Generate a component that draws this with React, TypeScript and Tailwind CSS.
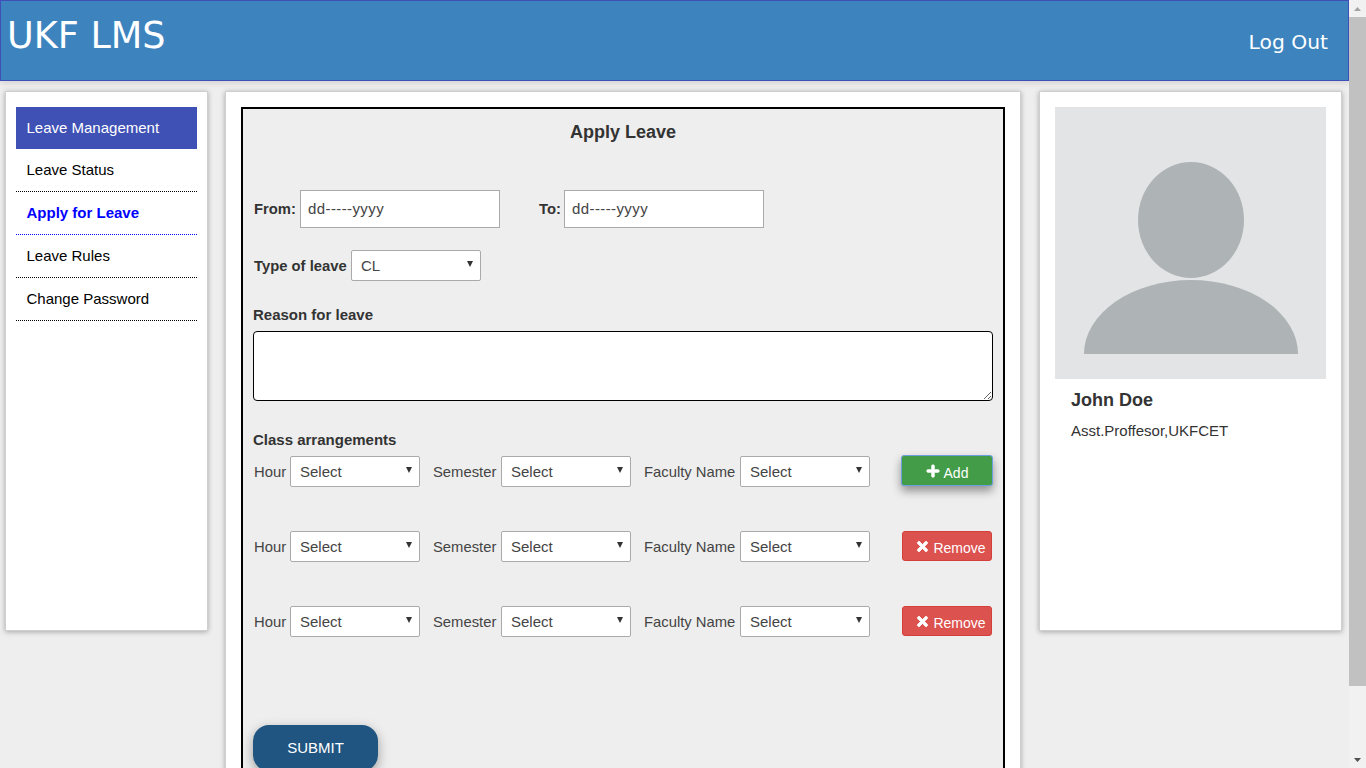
import React from 'react';
import { FaPlus, FaTimes } from 'react-icons/fa';

const menu = [
  { label: 'Leave Status' },
  { label: 'Apply for Leave', active: true },
  { label: 'Leave Rules' },
  { label: 'Change Password' },
];

function Dropdown({ value, className }: { value: string; className?: string }) {
  return (
    <div className={`relative h-[31px] w-[130px] ${className ?? ''}`}>
      <select className="h-full w-full appearance-none rounded-[2px] border border-[#aaa] bg-white pl-[9px] pt-[2px] text-[15px] font-normal text-[#444] outline-none">
        <option>{value}</option>
      </select>
      <svg className="pointer-events-none absolute right-[8px] top-[11px]" width="6" height="6" viewBox="0 0 6 6">
        <path d="M0 0h6L3 6z" fill="#333" />
      </svg>
    </div>
  );
}

function ArrangementRow({ first }: { first?: boolean }) {
  return (
    <div className="flex h-[31px] items-center text-[14.8px] text-[#444]">
      <span className="mt-[2px] w-[37px] pl-px">Hour</span>
      <Dropdown value="Select" />
      <span className="ml-[13px] mt-[2px] w-[68px]">Semester</span>
      <Dropdown value="Select" />
      <span className="ml-[13px] mt-[2px] w-[96px]">Faculty Name</span>
      <Dropdown value="Select" />
      {first ? (
        <button className="ml-[31px] mt-[-2px] flex h-[31px] w-[92px] items-center justify-center gap-[4px] rounded-[3px] border border-[#6a9fe0] bg-[#439c47] text-[14px] text-white shadow-[0_5px_10px_rgba(0,0,0,0.4)]">
          <FaPlus className="size-[14px] stroke-[30]" />
          <span className="mt-[6px]">Add</span>
        </button>
      ) : (
        <button className="ml-[32px] mt-[-1px] flex h-[30px] w-[90px] items-center justify-center gap-[3px] rounded-[3px] border border-[#d43f3a] bg-[#dc524f] pl-[7px] text-[14px] text-white">
          <FaTimes className="size-[15px] stroke-[30]" />
          <span className="mt-[4px]">Remove</span>
        </button>
      )}
    </div>
  );
}

function Scrollbar() {
  return (
    <div className="flex h-screen w-[17px] shrink-0 flex-col bg-[#f1f1f1]">
      <div className="flex h-[17px] items-center justify-center">
        <svg width="7" height="4" viewBox="0 0 7 4"><path d="M3.5 0L7 4H0z" fill="#a3a3a3" /></svg>
      </div>
      <div className="h-[669px] w-full bg-[#c1c1c1]" />
      <div className="flex-1" />
      <div className="flex h-[17px] items-center justify-center">
        <svg width="7" height="4" viewBox="0 0 7 4"><path d="M0 0h7L3.5 4z" fill="#505050" /></svg>
      </div>
    </div>
  );
}

export default function App() {
  return (
    <div className="flex h-screen overflow-hidden bg-[#eeeeee] font-['Liberation_Sans',Arial,sans-serif]">
      <div className="h-screen min-w-0 flex-1 overflow-hidden">
        <header className="flex h-[81px] items-start justify-between border border-[#3f4fb8] bg-[#3d84bf] font-['DejaVu_Sans',Verdana,sans-serif] text-white shadow-[0_2px_6px_rgba(0,0,0,0.12)]">
          <div className="ml-[6px] mt-[13px] text-[36.6px] leading-[44px]">UKF LMS</div>
          <div className="mr-[20px] mt-[27px] text-[20.3px] leading-[28px]">Log Out</div>
        </header>

        <div className="mt-[10px] flex items-start pl-[5px]">
          <aside className="h-[540px] w-[203px] shrink-0 border border-[#cfcfcf] bg-white px-[10px] pt-[15px] shadow-[0_1px_5px_rgba(0,0,0,0.3)]">
            <div className="flex h-[42px] items-center bg-[#3f51b5] pl-[10.5px] text-[15px] text-white">Leave Management</div>
            {menu.map((item) => (
              <div
                key={item.label}
                className={`flex h-[43px] items-center border-b border-dotted pl-[10.5px] text-[15px] ${
                  item.active ? 'border-[#0000ff] font-bold text-[#0000ff]' : 'border-black text-black'
                }`}
              >
                {item.label}
              </div>
            ))}
          </aside>

          <main className="ml-[17px] h-[900px] w-[796px] shrink-0 border border-[#cfcfcf] bg-white px-[15px] pt-[15px] shadow-[0_1px_5px_rgba(0,0,0,0.3)]">
            <div className="h-[800px] border-2 border-black bg-[#eeeeee] px-[10px] text-[#333]">
              <h2 className="mt-[12px] text-center text-[18px] font-bold leading-[22px]">Apply Leave</h2>

              <div className="mt-[47px] flex h-[38px] items-center text-[14.8px] font-bold">
                <span className="w-[47px] pl-px">From:</span>
                <input readOnly defaultValue="dd-----yyyy" className="h-[38px] w-[200px] border border-[#aaa] bg-white pb-px pl-[7px] text-[15px] font-normal tracking-[0.4px] text-[#444] outline-none" />
                <span className="ml-[39px] w-[25px]">To:</span>
                <input readOnly defaultValue="dd-----yyyy" className="h-[38px] w-[200px] border border-[#aaa] bg-white pb-px pl-[7px] text-[15px] font-normal tracking-[0.4px] text-[#444] outline-none" />
              </div>

              <div className="mt-[22px] flex h-[31px] items-center text-[14.8px] font-bold">
                <span className="mt-[2px] w-[98px] pl-px">Type of leave</span>
                <Dropdown value="CL" />
              </div>

              <div className="mt-[24px] text-[15px] font-bold leading-[20px]">Reason for leave</div>
              <textarea className="mt-[6px] block h-[70px] w-[740px] rounded-[4px] border border-black bg-white outline-none" />

              <div className="mt-[29px] text-[15px] font-bold leading-[20px]">Class arrangements</div>
              <div className="mt-[6px] flex flex-col gap-[44px]">
                <ArrangementRow first />
                <ArrangementRow />
                <ArrangementRow />
              </div>

              <button className="mt-[88px] h-[46px] w-[125px] rounded-[16px] bg-[#1f5580] text-[15px] text-white shadow-[0_4px_12px_rgba(0,0,0,0.35)]">
                SUBMIT
              </button>
            </div>
          </main>

          <aside className="ml-[18px] h-[540px] w-[303px] shrink-0 border border-[#cfcfcf] bg-white px-[15px] pt-[15px] shadow-[0_1px_5px_rgba(0,0,0,0.3)]">
            <svg className="block h-[272px] w-[271px]" viewBox="0 0 271 272">
              <rect width="271" height="272" fill="#e3e4e6" />
              <ellipse cx="136" cy="113" rx="53" ry="58" fill="#aeb3b6" />
              <path d="M29 247A107 74 0 0 1 243 247z" fill="#aeb3b6" />
            </svg>
            <div className="ml-[16px] mt-[10px] text-[18px] font-bold leading-[22px] text-[#333]">John Doe</div>
            <div className="ml-[16px] mt-[10px] text-[15px] leading-[20px] text-[#333]">Asst.Proffesor,UKFCET</div>
          </aside>
        </div>
      </div>
      <Scrollbar />
    </div>
  );
}
